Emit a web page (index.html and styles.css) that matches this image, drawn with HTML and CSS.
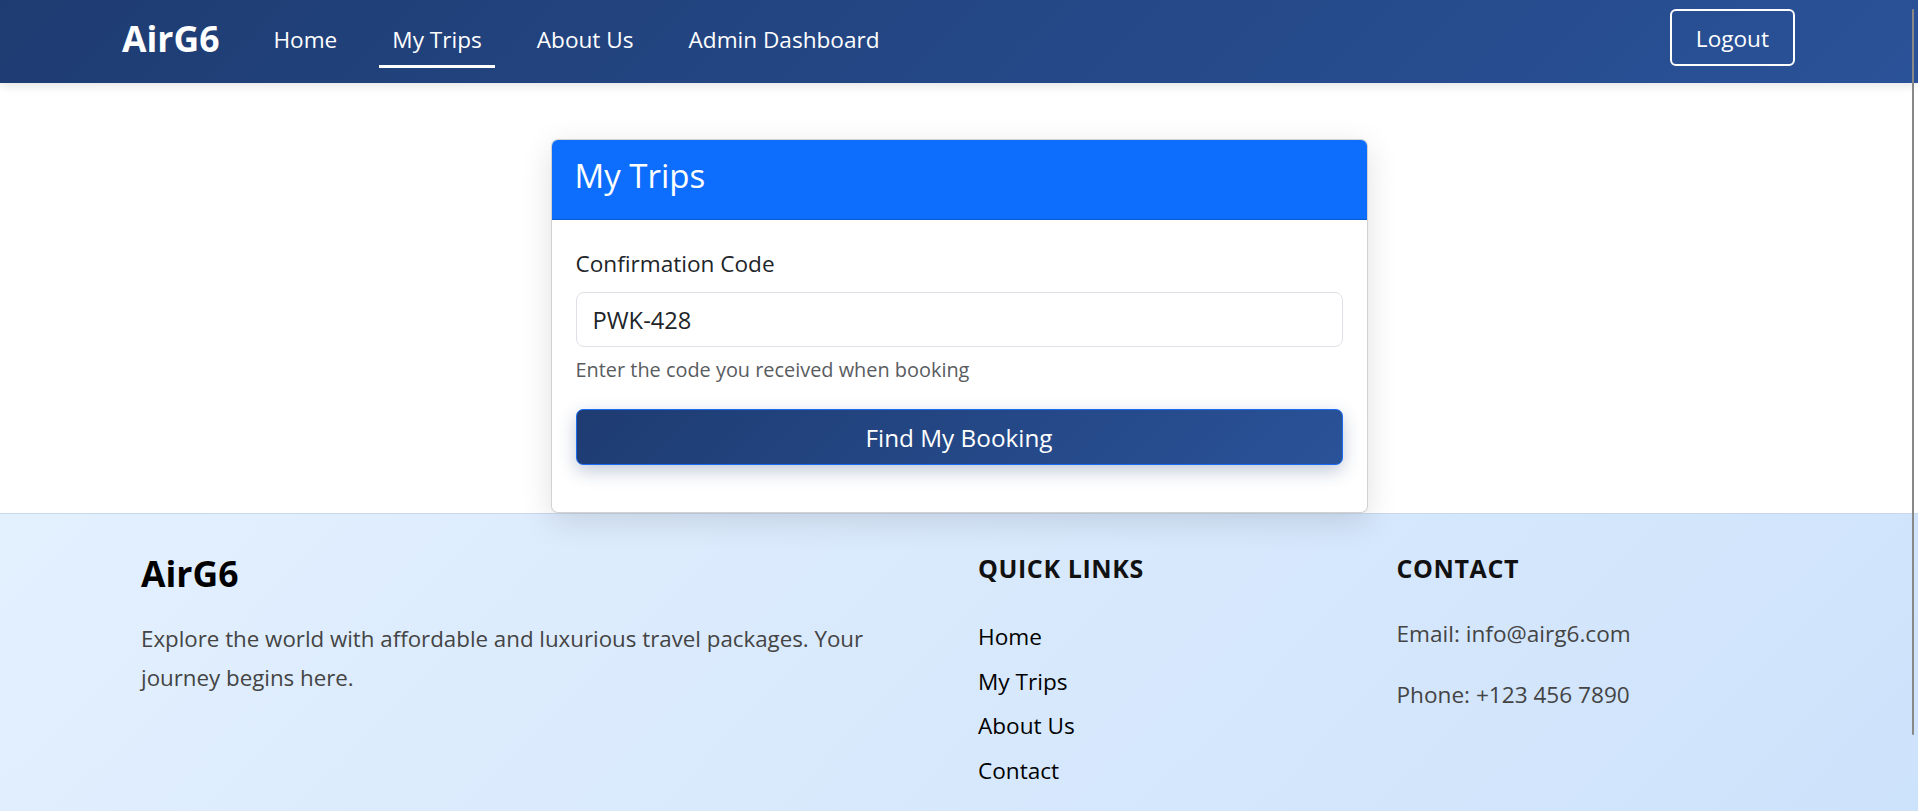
FILE: index.html
```html
<!DOCTYPE html>
<html lang="en">
<head>
<meta charset="utf-8">
<title>My Trips - AirG6</title>
<link rel="stylesheet" href="styles.css">
</head>
<body>
<nav class="navbar">
  <div class="nav-inner">
    <a class="brand" href="#">AirG6</a>
    <ul class="nav-links">
      <li><a class="nav-link" href="#">Home</a></li>
      <li><a class="nav-link active" href="#">My Trips</a></li>
      <li><a class="nav-link" href="#">About Us</a></li>
      <li><a class="nav-link" href="#">Admin Dashboard</a></li>
    </ul>
    <button class="btn-logout" type="button">Logout</button>
  </div>
</nav>

<main class="main">
  <div class="card">
    <div class="card-header">
      <h3 class="card-title">My Trips</h3>
    </div>
    <div class="card-body">
      <form class="trip-form">
        <div class="form-group">
          <label class="form-label" for="code">Confirmation Code</label>
          <input class="form-control" id="code" type="text" value="PWK-428">
          <div class="form-text">Enter the code you received when booking</div>
        </div>
        <button class="btn-find" type="button">Find My Booking</button>
      </form>
    </div>
  </div>
</main>

<footer class="footer">
  <div class="footer-inner">
    <div class="footer-col">
      <h4 class="footer-brand">AirG6</h4>
      <p class="footer-text">Explore the world with affordable and luxurious travel packages. Your journey begins here.</p>
    </div>
    <div class="footer-col">
      <h5 class="footer-heading">QUICK LINKS</h5>
      <ul class="footer-links">
        <li><a href="#">Home</a></li>
        <li><a href="#">My Trips</a></li>
        <li><a href="#">About Us</a></li>
        <li><a href="#">Contact</a></li>
      </ul>
    </div>
    <div class="footer-col">
      <h5 class="footer-heading footer-heading-contact">CONTACT</h5>
      <p class="contact-line">Email: info@airg6.com</p>
      <p class="contact-line">Phone: +123 456 7890</p>
    </div>
  </div>
</footer>

<div class="scroll-thumb"></div>
</body>
</html>
```

FILE: styles.css
```css
html {
  overflow: hidden;
}

body {
  margin: 0;
  font-family: "Open Sans", "Noto Sans", sans-serif;
  font-size: 22.6px;
  line-height: 1.5;
  color: #212529;
  background: #fff;
}

/* ---------- Navbar ---------- */
.navbar {
  background: linear-gradient(135deg, #1e3c72 0%, #2a5298 100%);
  box-shadow: 0 2px 10px rgba(0, 0, 0, 0.12);
  position: relative;
  z-index: 2;
}

.nav-inner {
  display: flex;
  align-items: center;
  height: 83px;
  padding: 0 123px 0 122px;
}

.brand {
  color: #fff;
  text-decoration: none;
  font-weight: 700;
  font-size: 35.5px;
  line-height: 1.2;
  padding-bottom: 6px;
}

.nav-links {
  display: flex;
  list-style: none;
  margin: 0 0 0 41px;
  padding: 0;
  gap: 29px;
}

.nav-link {
  display: block;
  color: #fff;
  text-decoration: none;
  padding: 8.5px 13px 8.5px;
  border-bottom: 3px solid transparent;
}

.nav-link.active {
  border-bottom-color: #fff;
}

.btn-logout {
  margin-left: auto;
  align-self: flex-start;
  margin-top: 9px;
  font-family: inherit;
  font-size: 22.6px;
  line-height: 1.5;
  color: #fff;
  background: transparent;
  border: 2px solid #fff;
  border-radius: 6px;
  padding: 11px 24px 8px;
}

/* ---------- Main ---------- */
.main {
  padding: 56px 0 0;
}

.card {
  position: relative;
  z-index: 1;
  width: 817px;
  box-sizing: border-box;
  margin: 0 auto;
  background: #fff;
  border: 1px solid rgba(0, 0, 0, 0.175);
  border-radius: 7px;
  overflow: hidden;
  box-shadow: 0 8px 32px rgba(0, 0, 0, 0.12);
}

.card-header {
  background: #0d6efd;
  padding: 16px 23px 23px;
  border-bottom: 1px solid rgba(0, 0, 0, 0.175);
}

.card-title {
  margin: 0;
  color: #fff;
  font-weight: 400;
  font-size: 33px;
  line-height: 1.2;
}

.card-body {
  padding: 27px 24px 47px;
}

.form-label {
  display: block;
  margin-bottom: 11.8px;
}

.form-control {
  display: block;
  width: 100%;
  box-sizing: border-box;
  height: 55px;
  padding: 0 16px;
  font-family: inherit;
  font-size: 23.7px;
  color: #212529;
  background: #fff;
  border: 1px solid #dee2e6;
  border-radius: 8px;
  outline: none;
}

.form-text {
  margin-top: 7.4px;
  font-size: 19.9px;
  color: #595c5f;
}

.btn-find {
  display: block;
  width: 100%;
  height: 56px;
  margin-top: 24.8px;
  font-family: inherit;
  font-size: 24.3px;
  color: #fff;
  background: linear-gradient(135deg, #1e3c72 0%, #2a5298 100%);
  border: 1px solid #1a6cf0;
  border-radius: 7px;
  box-shadow: 0 6px 18px rgba(30, 60, 114, 0.28);
}

/* ---------- Footer ---------- */
.footer {
  background: linear-gradient(135deg, #e3f0fe 0%, #cde2fb 100%);
  border-top: 1px solid #c8d7ea;
  padding: 37.5px 0 40px;
}

.footer-inner {
  display: grid;
  grid-template-columns: 2fr 1fr 1fr;
  padding: 0 118px 0 126px;
}

.footer-col {
  padding: 0 15px;
}

.footer-brand {
  margin: 0 0 24.4px;
  font-size: 35.5px;
  font-weight: 700;
  line-height: 1.2;
  color: #000;
}

.footer-text {
  margin: 0;
  font-size: 22.3px;
  line-height: 39px;
  color: #444;
}

.footer-heading {
  margin: 1px 0 36.7px;
  font-size: 25px;
  font-weight: 700;
  letter-spacing: 0.6px;
  line-height: 1.2;
  color: #111;
}

.footer-heading-contact {
  margin-bottom: 33.7px;
}

.footer-links {
  list-style: none;
  margin: 0;
  padding: 0;
}

.footer-links li {
  margin-bottom: 11.1px;
}

.footer-links a {
  color: #000;
  text-decoration: none;
}

.contact-line {
  margin: 0 0 27.1px;
  color: #444;
}

/* overlay scrollbar thumb */
.scroll-thumb {
  position: fixed;
  top: 9px;
  right: 4px;
  width: 2px;
  height: 726px;
  background: #888;
  border-radius: 1px;
  z-index: 5;
}
```
